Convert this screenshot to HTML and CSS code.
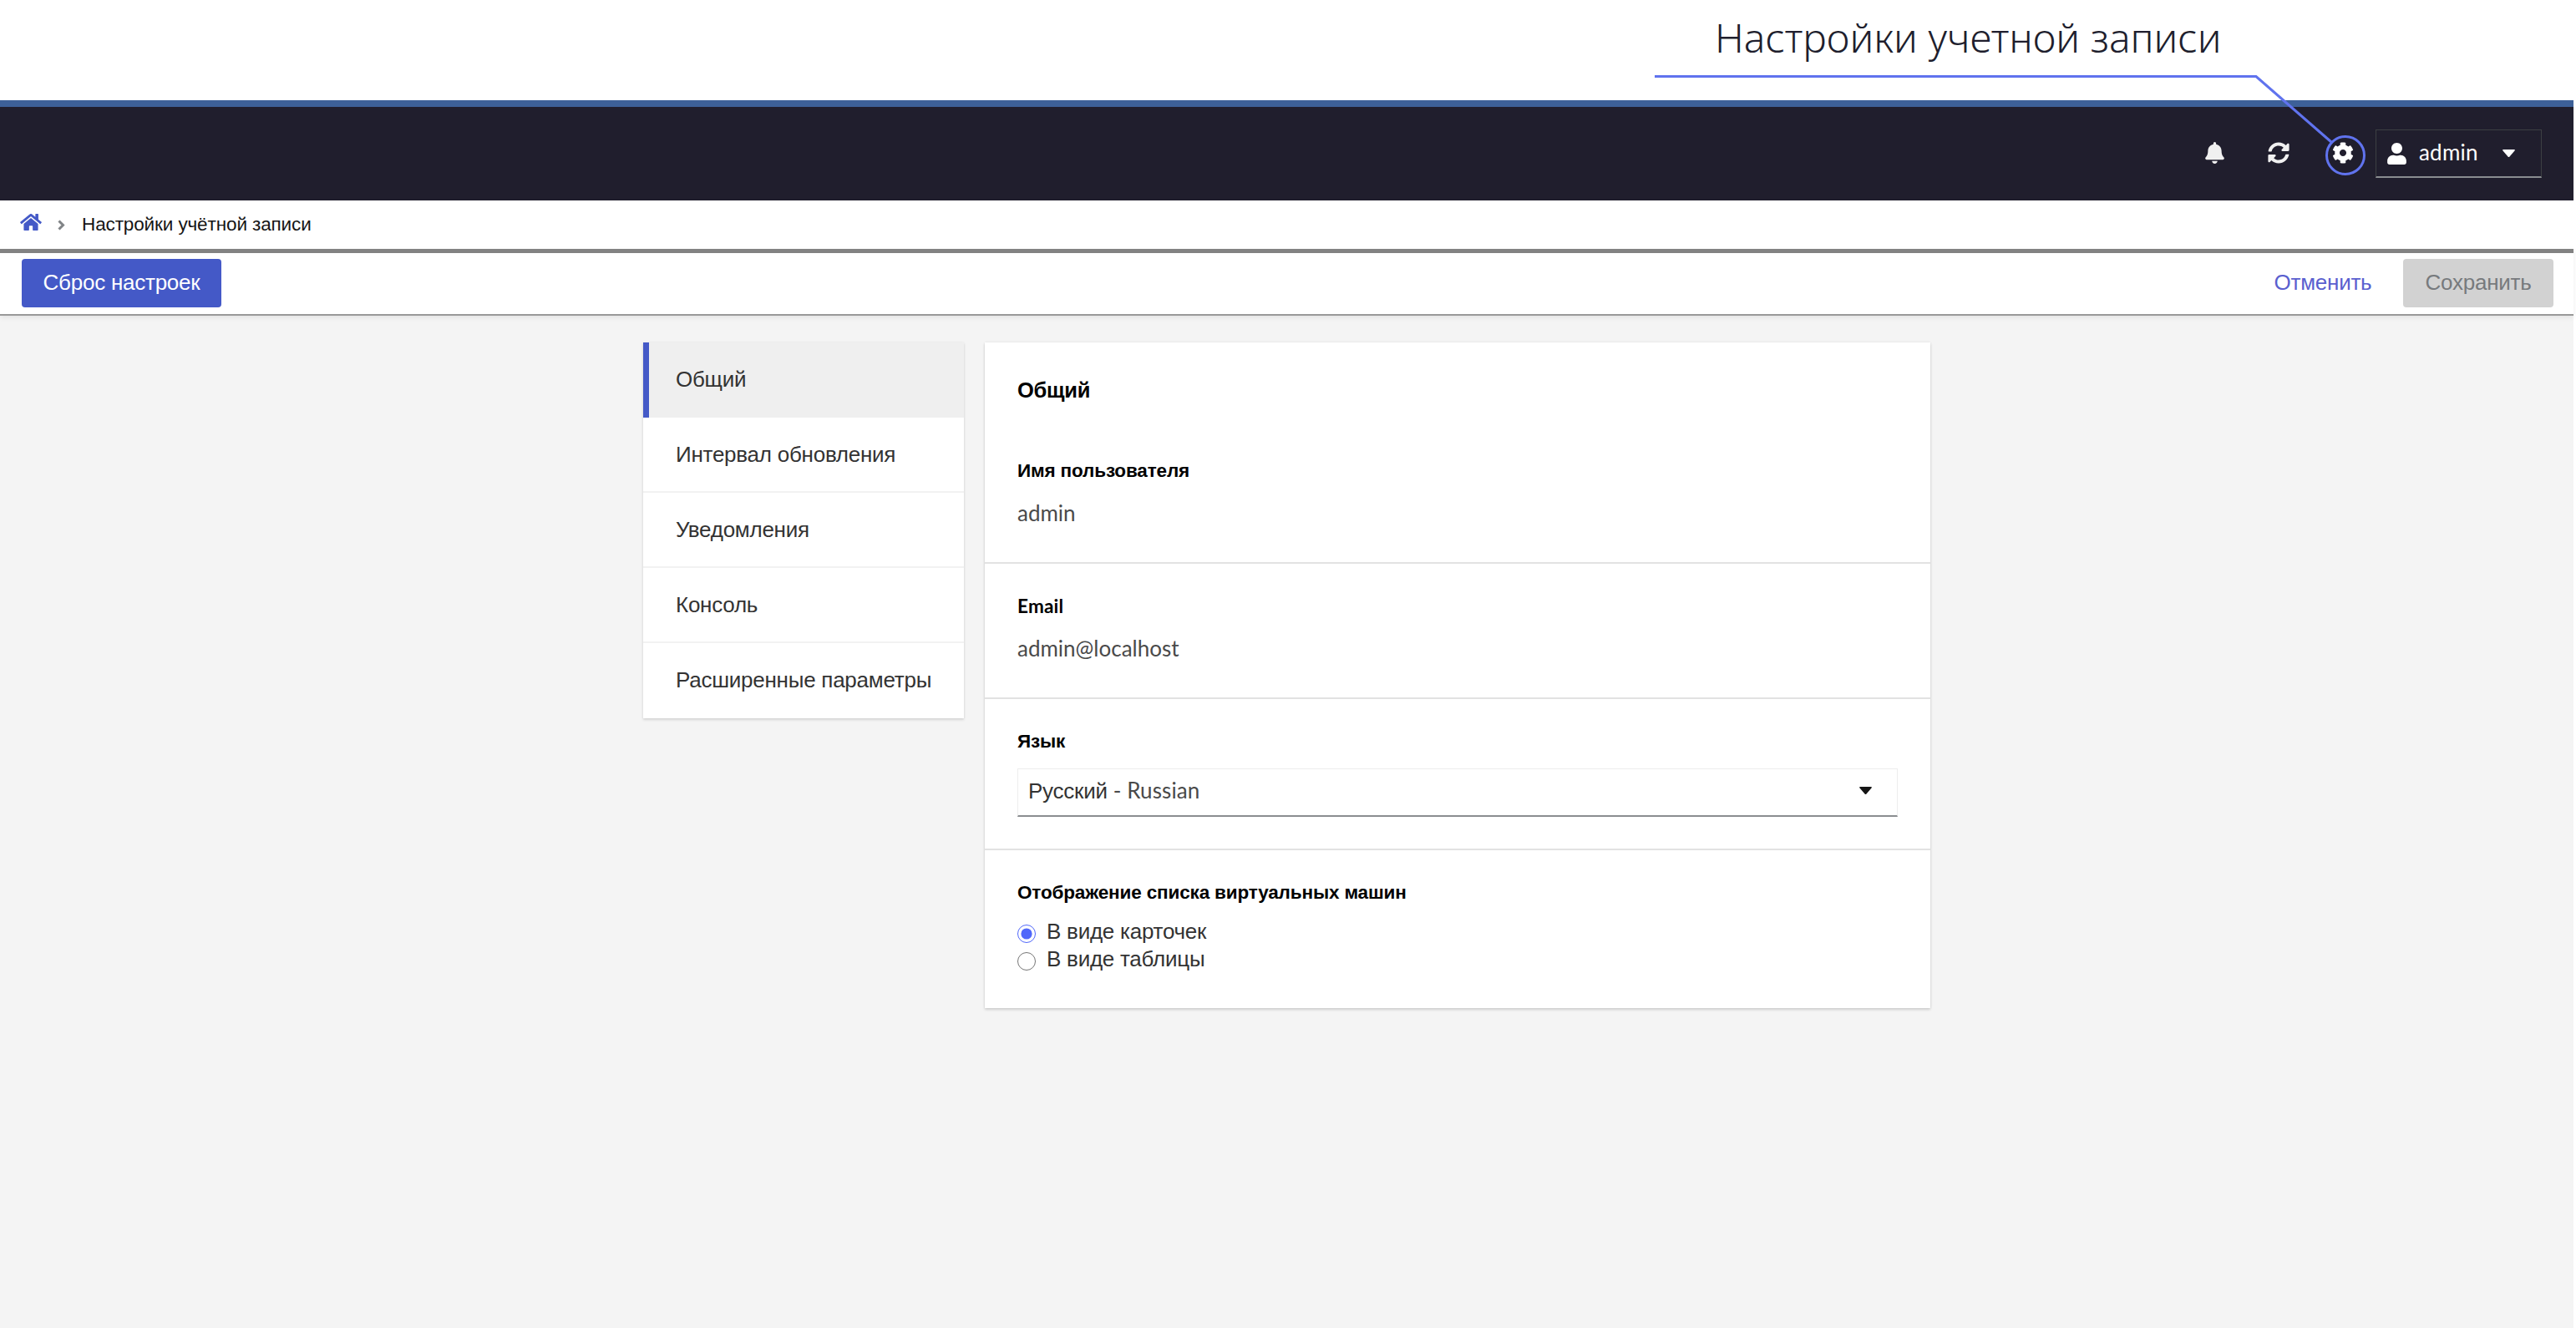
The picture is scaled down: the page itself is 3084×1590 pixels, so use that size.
FILE: index.html
```html
<!DOCTYPE html>
<html lang="ru">
<head>
    <meta charset="UTF-8">
    <title>Настройки учётной записи</title>
    <link rel="stylesheet" href="styles.css">
</head>
<body>
<div class="caption"><span class="caption-text">Настройки учетной записи</span></div>
<div class="app">
    <header class="topbar">
        <svg class="icon bell" viewBox="0 0 448 512"><path d="M224 512c35.32 0 63.97-28.65 63.97-64H160.03c0 35.35 28.65 64 63.97 64zm215.39-149.71c-19.32-20.76-55.47-51.99-55.47-154.29 0-77.7-54.48-139.9-127.94-155.16V32c0-17.67-14.32-32-31.98-32s-31.98 14.33-31.98 32v20.84C118.56 68.1 64.08 130.3 64.08 208c0 102.3-36.15 133.53-55.47 154.29-6 6.45-8.66 14.16-8.61 21.71.11 16.4 12.98 32 32.1 32h383.8c19.12 0 32-15.6 32.1-32 .05-7.55-2.61-15.27-8.61-21.71z"/></svg>
        <svg class="icon sync" viewBox="0 0 512 512"><path d="M370.72 133.28C339.458 104.008 298.888 87.962 255.848 88c-77.458.068-144.328 53.178-162.791 126.85-1.344 5.363-6.122 9.15-11.651 9.15H24.103c-7.498 0-13.194-6.807-11.807-14.176C33.933 94.924 134.813 8 256 8c66.448 0 126.791 26.136 171.315 68.685L463.03 40.97C478.149 25.851 504 36.559 504 57.941V192c0 13.255-10.745 24-24 24H345.941c-21.382 0-32.09-25.851-16.971-40.971l41.75-41.749zM32 296h134.059c21.382 0 32.09 25.851 16.971 40.971l-41.75 41.75c31.262 29.273 71.835 45.319 114.876 45.28 77.418-.07 144.315-53.144 162.787-126.849 1.344-5.363 6.122-9.15 11.651-9.15h57.304c7.498 0 13.194 6.807 11.807 14.176C478.067 417.076 377.187 504 256 504c-66.448 0-126.791-26.136-171.315-68.685L48.97 471.03C33.851 486.149 8 475.441 8 454.059V320c0-13.255 10.745-24 24-24z"/></svg>
        <svg class="icon cog" viewBox="0 0 512 512"><path d="M487.4 315.7l-42.6-24.6c4.3-23.2 4.3-47 0-70.2l42.6-24.6c4.9-2.8 7.1-8.6 5.5-14-11.1-35.6-30-67.8-54.7-94.6-3.8-4.1-10-5.1-14.8-2.3L380.8 110c-17.9-15.4-38.5-27.3-60.8-35.1V25.800c0-5.6-3.9-10.500-9.4-11.700-36.700-8.200-74.300-7.800-109.200 0-5.500 1.200-9.400 6.100-9.400 11.700V75c-22.200 7.900-42.800 19.800-60.800 35.100L88.700 85.500c-4.900-2.800-11-1.900-14.800 2.300-24.700 26.700-43.600 58.900-54.700 94.600-1.700 5.400.6 11.200 5.500 14L67.300 221c-4.300 23.200-4.300 47 0 70.200l-42.600 24.600c-4.900 2.800-7.100 8.600-5.500 14 11.100 35.600 30 67.800 54.700 94.600 3.800 4.100 10 5.100 14.800 2.300l42.600-24.600c17.900 15.400 38.500 27.300 60.800 35.100v49.200c0 5.600 3.900 10.500 9.400 11.700 36.700 8.200 74.300 7.800 109.200 0 5.500-1.200 9.400-6.100 9.400-11.700v-49.200c22.200-7.900 42.800-19.800 60.800-35.100l42.600 24.600c4.900 2.800 11 1.900 14.800-2.300 24.700-26.700 43.600-58.900 54.700-94.600 1.500-5.500-.7-11.300-5.600-14.100zM256 336c-44.100 0-80-35.900-80-80s35.900-80 80-80 80 35.900 80 80-35.900 80-80 80z"/></svg>
        <div class="user">
            <svg class="icon person" viewBox="0 0 448 512"><path d="M224 256c70.700 0 128-57.300 128-128S294.700 0 224 0 96 57.300 96 128s57.300 128 128 128zm89.600 32h-16.700c-22.200 10.200-46.900 16-72.900 16s-50.600-5.800-72.900-16h-16.700C60.200 288 0 348.200 0 422.400V464c0 26.500 21.500 48 48 48h352c26.500 0 48-21.500 48-48v-41.600c0-74.200-60.200-134.400-134.400-134.400z"/></svg>
            <span class="user-name">admin</span>
            <svg class="caret" viewBox="0 0 15 9"><path d="M1 0h13q1.500 .5 .5 1.600L8.500 8.400q-1 1-2 0L.5 1.600Q-.5 .5 1 0z"/></svg>
        </div>
    </header>

    <nav class="breadcrumb">
        <svg class="home" viewBox="0 0 576 448"><path d="M280.370 116.260L96 268.110V432a16 16 0 0 0 16 16l112.060-.29a16 16 0 0 0 15.920-16V336a16 16 0 0 1 16-16h64a16 16 0 0 1 16 16v95.640a16 16 0 0 0 16 16.050L464 448a16 16 0 0 0 16-16V268L295.670 116.260a12.190 12.190 0 0 0-15.300 0zM571.600 219.470L488 150.560V12.050a12 12 0 0 0-12-12h-56a12 12 0 0 0-12 12v72.610L318.470 11a48 48 0 0 0-61 0L4.340 219.470a12 12 0 0 0-1.600 16.900l25.500 31a12 12 0 0 0 16.900 1.620l235.230-193.740a12.190 12.190 0 0 1 15.300 0L530.900 269a12 12 0 0 0 16.900-1.600l25.500-31a12 12 0 0 0-1.700-16.930z"/></svg>
        <svg class="angle" viewBox="0 0 9 13"><path d="M1.500 1.500l5 5-5 5"/></svg>
        <span class="crumb">Настройки учётной записи</span>
    </nav>

    <div class="toolbar">
        <button class="btn btn-primary">Сброс настроек</button>
        <button class="btn btn-link">Отменить</button>
        <button class="btn btn-disabled" disabled>Сохранить</button>
    </div>

    <main class="content">
        <ul class="menu">
            <li class="active">Общий</li>
            <li>Интервал обновления</li>
            <li>Уведомления</li>
            <li>Консоль</li>
            <li>Расширенные параметры</li>
        </ul>
        <div class="card">
            <section class="first">
                <h1>Общий</h1>
                <h2>Имя пользователя</h2>
                <p class="value">admin</p>
            </section>
            <section>
                <h2 class="latin">Email</h2>
                <p class="value">admin@localhost</p>
            </section>
            <section class="lang">
                <h2>Язык</h2>
                <div class="select">
                    <span class="select-text">Русский <span class="select-latin">- Russian</span></span>
                    <svg class="caret" viewBox="0 0 15 9"><path d="M1 0h13q1.500 .5 .5 1.600L8.500 8.400q-1 1-2 0L.5 1.600Q-.5 .5 1 0z"/></svg>
                </div>
            </section>
            <section class="view">
                <h2>Отображение списка виртуальных машин</h2>
                <label class="option"><input type="radio" name="view" checked>В виде карточек</label>
                <label class="option"><input type="radio" name="view">В виде таблицы</label>
            </section>
        </div>
    </main>
</div>

<svg class="callout" viewBox="0 0 3084 240">
    <path d="M1981 91.500H2701L2791 170"/>
    <circle cx="2808" cy="186" r="22.500"/>
</svg>
</body>
</html>
```

FILE: styles.css
```css
*{
    margin: 0;
    padding: 0;
    box-sizing: border-box;
}
body{
    position: relative;
    height: 1590px;
    overflow: hidden;
    background: #ffffff;
    font-family: "Liberation Sans", Arial, sans-serif;
    font-size: 26px;
    letter-spacing: -.25px;
    color: #151515;
}
.caption{
    height: 120px;
    padding: 13px 0 0 2053px;
}
.caption-text{
    font-family: "Noto Sans", sans-serif;
    font-weight: 300;
    font-size: 48px;
    line-height: 64px;
    letter-spacing: 0;
    color: #201e2d;
    white-space: nowrap;
}
.callout{
    position: absolute;
    top: 0;
    left: 0;
    width: 3084px;
    height: 240px;
    fill: none;
    stroke: #6073ee;
    stroke-width: 3;
}
.app{
    display: flex;
    flex-direction: column;
    width: 3081px;
    height: 1470px;
    background: #f4f4f4;
}
.topbar{
    display: flex;
    align-items: center;
    height: 120px;
    padding-right: 38px;
    border-top: 8px solid #3d6098;
    background: #201e2d;
}
.icon{
    height: 26px;
    margin-bottom: 2px;
    fill: #f0f0f0;
}
.bell{
    width: 23px;
    margin-left: auto;
    margin-right: 52px;
}
.sync{
    width: 26px;
    margin-right: 51px;
}
.cog{
    width: 26px;
    margin-right: 26px;
    fill: #ffffff;
}
.user{
    display: flex;
    align-items: center;
    width: 199px;
    height: 58px;
    padding: 0 31px 0 13px;
    border: 1px solid #3c3f42;
    border-bottom: 2px solid #8a8d90;
    color: #ffffff;
}
.person{
    width: 23px;
    margin-right: 15px;
    margin-bottom: 0;
    fill: #ffffff;
}
.user-name{
    padding-bottom: 3px;
    font-family: Lato, sans-serif;
    letter-spacing: .2px;
}
.caret{
    width: 15px;
    height: 9px;
    margin-left: auto;
    fill: currentColor;
}
.breadcrumb{
    display: flex;
    align-items: center;
    height: 58px;
    padding-left: 24px;
    background: #ffffff;
}
.home{
    width: 26px;
    height: 20px;
    margin-bottom: 6px;
    fill: #4459c7;
}
.angle{
    width: 9px;
    height: 13px;
    margin-left: 19px;
    margin-right: 19px;
    fill: none;
    stroke: #808386;
    stroke-width: 3;
}
.crumb{
    padding-left: 1px;
    font-size: 22.5px;
    letter-spacing: -.12px;
}
.toolbar{
    display: flex;
    align-items: flex-start;
    height: 80px;
    padding: 7px 24px 0 26px;
    border-top: 5px solid #828282;
    border-bottom: 2px solid #999999;
    background: #ffffff;
    box-shadow: 0 2px 6px rgba(0,0,0,.08);
}
.btn{
    height: 58px;
    padding-bottom: 1px;
    border: none;
    border-radius: 4px;
    background: none;
    font: inherit;
    letter-spacing: inherit;
}
.btn-primary{
    width: 239px;
    background: #4459c7;
    color: #ffffff;
}
.btn-link{
    width: 170px;
    margin-left: auto;
    margin-right: 11px;
    color: #5a5fcf;
}
.btn-disabled{
    width: 180px;
    background: #d2d2d2;
    color: #777a7d;
}
.content{
    display: flex;
    align-items: flex-start;
    gap: 25px;
    padding: 32px 0 0 770px;
}
.menu{
    width: 384px;
    list-style: none;
    background: #ffffff;
    box-shadow: 0 2px 3px rgba(0,0,0,.12), 0 0 3px rgba(0,0,0,.06);
}
.menu li{
    height: 90px;
    padding-left: 39px;
    border-bottom: 2px solid #f2f2f2;
    line-height: 88px;
    color: #333333;
}
.menu li:last-child{
    border-bottom: none;
}
.menu .active{
    padding-left: 32px;
    border-left: 7px solid #4459c7;
    border-bottom: none;
    background: #efefef;
}
.card{
    width: 1132px;
    background: #ffffff;
    box-shadow: 0 2px 3px rgba(0,0,0,.14), 0 0 3px rgba(0,0,0,.08);
}
.card section{
    padding: 33px 39px 40px;
    border-bottom: 2px solid #e2e2e2;
}
.card .first{
    padding-top: 38px;
}
.card .lang{
    padding-bottom: 38px;
}
.card .view{
    padding-bottom: 42px;
    border-bottom: none;
}
h1{
    margin-bottom: 60px;
    font-size: 25.5px;
    line-height: 38px;
    color: #000000;
}
h2{
    margin-bottom: 14px;
    font-size: 22.5px;
    line-height: 35px;
    letter-spacing: -.15px;
    color: #000000;
}
.latin{
    font-family: Lato, sans-serif;
    letter-spacing: .2px;
}
.value{
    font-family: Lato, sans-serif;
    line-height: 38px;
    letter-spacing: 0;
    color: #4a4a4a;
}
.lang h2{
    margin-bottom: 15px;
}
.select{
    display: flex;
    align-items: center;
    height: 58px;
    padding: 0 30px 4px 12px;
    border: 1px solid #ededed;
    border-bottom: 2px solid #8a8d90;
}
.select-text{
    color: #333333;
}
.select-latin{
    font-family: Lato, sans-serif;
    letter-spacing: .1px;
    color: #4a4a4a;
}
.view h2{
    margin-bottom: 13px;
}
.option{
    display: flex;
    align-items: center;
    height: 33px;
    color: #333333;
}
.option input{
    width: 22px;
    height: 22px;
    margin-top: 4px;
    margin-right: 13px;
    accent-color: #5168fa;
}
```
